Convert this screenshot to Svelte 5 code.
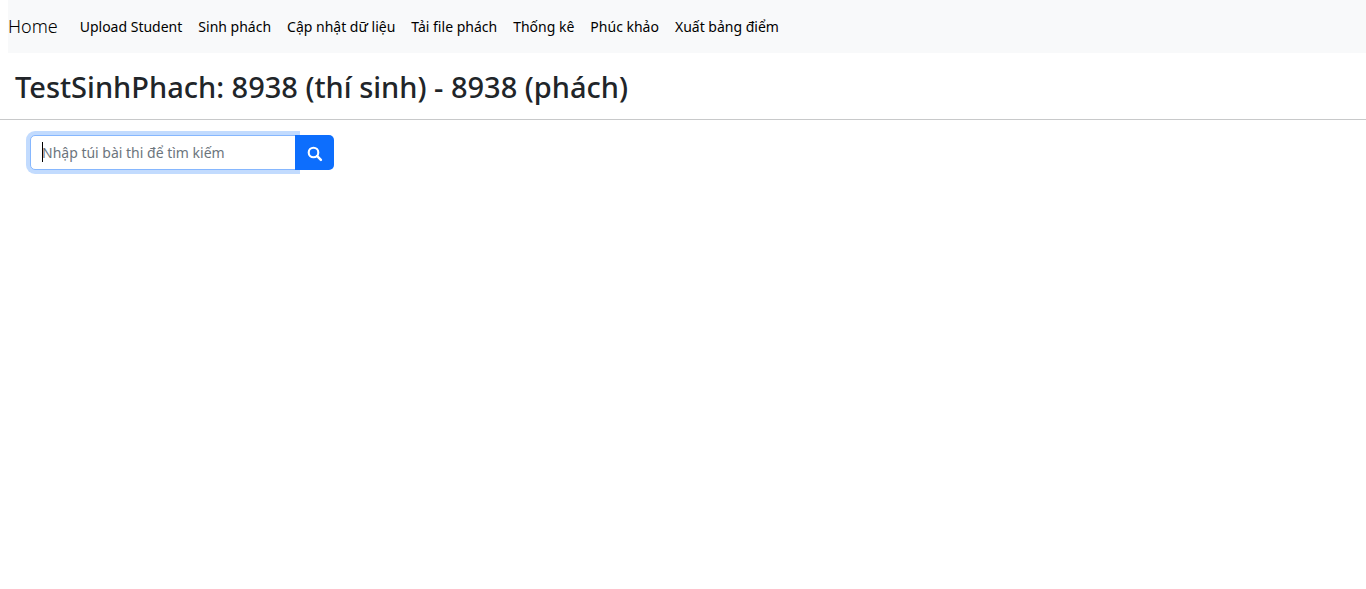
<script>
  const links = ['Upload Student', 'Sinh phách', 'Cập nhật dữ liệu', 'Tải file phách', 'Thống kê', 'Phúc khảo', 'Xuất bảng điểm'];
  let query = $state('');
  function focusOnMount(node) {
    node.focus();
  }
</script>

<header>
  <nav>
    <a class="brand" href="#home">Home</a>
    <ul>
      {#each links as link}
        <li><a href="#{link}">{link}</a></li>
      {/each}
    </ul>
  </nav>
</header>
<main>
  <h1>TestSinhPhach: 8938 (thí sinh) - 8938 (phách)</h1>
  <form onsubmit={(e) => e.preventDefault()}>
    <div class="field">
      <input type="text" aria-label="Nhập túi bài thi để tìm kiếm" placeholder="Nhập túi bài thi để tìm kiếm" bind:value={query} use:focusOnMount />
      {#if !query}<span class="caret" aria-hidden="true"></span>{/if}
    </div>
    <button type="submit" aria-label="Tìm kiếm">
      <svg viewBox="0 0 16 16" fill="none" stroke="currentColor" aria-hidden="true">
        <circle cx="6.500" cy="6.500" r="4.800" stroke-width="2.100" />
        <path d="M10.200 10.200 13.900 13.900" stroke-width="2.500" stroke-linecap="round" />
      </svg>
    </button>
  </form>
</main>

<style>
  :global(body) {
    font-family: "Noto Sans", "Open Sans", sans-serif;
    font-size: 14px;
    color: #212529;
    background: #fff;
  }
  header {
    padding-left: 8px;
  }
  nav {
    display: flex;
    align-items: center;
    min-height: 53px;
    background: #f8f9fa;
  }
  a {
    color: #000;
    text-decoration: none;
    white-space: nowrap;
  }
  .brand {
    font-size: 18px;
    font-weight: 300;
    line-height: 24px;
    margin-right: 22px;
    padding-bottom: 2px;
  }
  ul {
    display: flex;
    gap: 16px;
    margin: 0;
    padding: 0;
    list-style: none;
  }
  h1 {
    margin: 0;
    padding: 17px 15px 15px;
    border-bottom: 1px solid #c8c9ca;
    font-size: 29px;
    font-weight: 500;
    line-height: 34px;
  }
  form {
    display: flex;
    padding: 15px 30px;
  }
  .field {
    position: relative;
    width: 266px;
  }
  input {
    display: block;
    box-sizing: border-box;
    width: 100%;
    height: 35px;
    padding: 6px 11px;
    border: 1px solid #86b7fe;
    border-radius: 5px 0 0 5px;
    outline: 0;
    font: inherit;
    color: #212529;
    caret-color: transparent;
  }
  input:not(:placeholder-shown) {
    caret-color: auto;
  }
  input:focus {
    box-shadow: 0 0 0 4px rgba(13, 110, 253, 0.25);
  }
  input::placeholder {
    color: #6c757d;
    opacity: 1;
  }
  .caret {
    position: absolute;
    left: 12px;
    top: 7px;
    width: 1px;
    height: 20px;
    background: #000;
    visibility: hidden;
    pointer-events: none;
  }
  input:focus + .caret {
    visibility: visible;
  }
  button {
    position: relative;
    display: flex;
    align-items: center;
    justify-content: center;
    width: 39px;
    height: 35px;
    margin-left: -1px;
    padding: 3px 0 0;
    border: 0;
    border-radius: 0 5px 5px 0;
    color: #fff;
    background: #0d6efd;
  }
  svg {
    width: 16px;
    height: 16px;
  }
</style>
